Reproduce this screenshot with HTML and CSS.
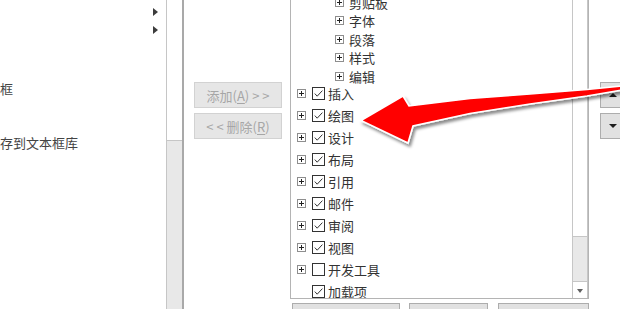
FILE: index.html
```html
<!DOCTYPE html>
<html lang="zh-CN">
<head>
<meta charset="utf-8">
<title>自定义功能区</title>
<link rel="stylesheet" href="styles.css">
</head>
<body>
<svg class="defs" width="0" height="0" aria-hidden="true">
  <symbol id="cb-on" viewBox="0 0 13 13">
    <rect x="0.5" y="0.5" width="12" height="12" fill="#fff" stroke="#333"/>
    <polyline points="2.8,6.6 5.2,9.2 10.4,3.6" fill="none" stroke="#333" stroke-width="1"/>
  </symbol>
  <symbol id="cb-off" viewBox="0 0 13 13">
    <rect x="0.5" y="0.5" width="12" height="12" fill="#fff" stroke="#333"/>
  </symbol>
</svg>
<div class="page">
  <div class="dialog">
    <div class="left-list">
      <div class="left-items">
        <div class="litem arrow-row"><span class="tri"></span></div>
        <div class="litem arrow-row"><span class="tri"></span></div>
        <div class="litem text-row row-frame">框</div>
        <div class="litem text-row row-save">存到文本框库</div>
      </div>
      <div class="vscroll left-scroll">
        <div class="thumb left-thumb"></div>
        <div class="track"></div>
      </div>
    </div>

    <div class="mid-buttons">
      <button class="btn btn-disabled" disabled>添加(<u>A</u>) &gt; &gt;</button>
      <button class="btn btn-disabled" disabled>&lt; &lt; 删除(<u>R</u>)</button>
    </div>

    <div class="right-col">
      <div class="tree-box">
        <div class="tree-view">
          <div class="tree-content">
            <div class="sub-group">
              <div class="sub-row"><span class="exp"></span><span class="label">剪贴板</span></div>
              <div class="sub-row"><span class="exp"></span><span class="label">字体</span></div>
              <div class="sub-row"><span class="exp"></span><span class="label">段落</span></div>
              <div class="sub-row"><span class="exp"></span><span class="label">样式</span></div>
              <div class="sub-row"><span class="exp"></span><span class="label">编辑</span></div>
            </div>
            <div class="top-group">
              <div class="top-row"><span class="exp"></span><svg class="cb"><use href="#cb-on"/></svg><span class="label">插入</span></div>
              <div class="top-row"><span class="exp"></span><svg class="cb"><use href="#cb-on"/></svg><span class="label">绘图</span></div>
              <div class="top-row"><span class="exp"></span><svg class="cb"><use href="#cb-on"/></svg><span class="label">设计</span></div>
              <div class="top-row"><span class="exp"></span><svg class="cb"><use href="#cb-on"/></svg><span class="label">布局</span></div>
              <div class="top-row"><span class="exp"></span><svg class="cb"><use href="#cb-on"/></svg><span class="label">引用</span></div>
              <div class="top-row"><span class="exp"></span><svg class="cb"><use href="#cb-on"/></svg><span class="label">邮件</span></div>
              <div class="top-row"><span class="exp"></span><svg class="cb"><use href="#cb-on"/></svg><span class="label">审阅</span></div>
              <div class="top-row"><span class="exp"></span><svg class="cb"><use href="#cb-on"/></svg><span class="label">视图</span></div>
              <div class="top-row"><span class="exp"></span><svg class="cb"><use href="#cb-off"/></svg><span class="label">开发工具</span></div>
              <div class="top-row"><span class="exp exp-none"></span><svg class="cb"><use href="#cb-on"/></svg><span class="label">加载项</span></div>
            </div>
          </div>
        </div>
        <div class="vscroll right-scroll">
          <div class="thumb right-thumb"></div>
          <div class="track"></div>
          <div class="scroll-down"><span class="tri-down-small"></span></div>
        </div>
      </div>
      <div class="bottom-buttons">
        <button class="btn btn-bottom b1"></button>
        <button class="btn btn-bottom b2"></button>
        <button class="btn btn-bottom b3"></button>
      </div>
    </div>

    <div class="side-buttons">
      <button class="btn btn-side"><span class="tri-up"></span></button>
      <button class="btn btn-side"><span class="tri-down"></span></button>
    </div>
  </div>

  <svg class="annot-arrow" width="620" height="309" viewBox="0 0 620 309" aria-hidden="true">
    <defs>
      <filter id="shadow" x="-10%" y="-30%" width="130%" height="170%">
        <feDropShadow dx="2" dy="3" stdDeviation="1.6" flood-color="#000" flood-opacity="0.45"/>
      </filter>
    </defs>
    <path d="M361,120.5 L403,96 L409,106 L470,98.5 L530,94 L587,89.5 L622,86 L622,90 L587,96 L530,104 L470,113.5 L413,126 L408,143 Z"
          fill="#ff0000" stroke="#ffffff" stroke-width="1.6" stroke-linejoin="miter" filter="url(#shadow)"/>
  </svg>
</div>
</body>
</html>
```

FILE: styles.css
```css
html, body {
  margin: 0;
  padding: 0;
  background: #ffffff;
}

body {
  width: 620px;
  height: 309px;
  overflow: hidden;
  font-family: "Noto Sans CJK SC", "Noto Sans", sans-serif;
  font-size: 13px;
  color: #333333;
}

.defs {
  position: absolute;
  width: 0;
  height: 0;
  overflow: hidden;
}

.page {
  position: relative;
  width: 620px;
  height: 309px;
  overflow: hidden;
}

.dialog {
  display: flex;
  align-items: flex-start;
  height: 309px;
}

/* ---------- left list ---------- */
.left-list {
  display: flex;
  height: 309px;
}

.left-items {
  width: 166px;
  padding-top: 3px;
  box-sizing: border-box;
}

.litem {
  height: 18px;
  display: flex;
  align-items: center;
  color: #444444;
  white-space: nowrap;
}

.arrow-row {
  justify-content: flex-start;
  padding-left: 153px;
}

.tri {
  width: 0;
  height: 0;
  border-top: 4px solid transparent;
  border-bottom: 4px solid transparent;
  border-left: 5px solid #3c3c3c;
}

.row-frame {
  margin-top: 40px;
}

.row-save {
  margin-top: 36px;
}

.vscroll {
  display: flex;
  flex-direction: column;
  box-sizing: border-box;
}

.left-scroll {
  width: 18px;
  height: 309px;
  border-left: 1px solid #c6c6c6;
  border-right: 2px solid #a9a9a9;
}

.thumb {
  background: #ffffff;
  box-sizing: border-box;
  border-bottom: 1px solid #c6c6c6;
}

.left-thumb {
  height: 141px;
}

.track {
  flex: 1;
  background: #e8e8e8;
}

/* ---------- middle buttons ---------- */
.mid-buttons {
  display: flex;
  flex-direction: column;
  gap: 5px;
  margin-left: 10px;
  padding-top: 82px;
  width: 88px;
}

.btn {
  font-family: "Noto Sans CJK SC", "Noto Sans", sans-serif;
  font-size: 13px;
  margin: 0;
  padding: 0;
  box-sizing: border-box;
  background: #e1e1e1;
  border: 1px solid #adadad;
  color: #333333;
  line-height: 1;
}

.btn-disabled {
  width: 88px;
  height: 26px;
  background: #e6e6e6;
  border-color: #d2d2d2;
  color: #a6a6a6;
  white-space: nowrap;
}

.btn-disabled u {
  text-underline-offset: 2px;
}

/* ---------- right tree ---------- */
.right-col {
  margin-left: 8px;
  display: flex;
  flex-direction: column;
}

.tree-box {
  display: flex;
  width: 299px;
  height: 299px;
  box-sizing: border-box;
  border-left: 1px solid #b4b4b4;
  border-right: 1px solid #b4b4b4;
  border-bottom: 1px solid #b4b4b4;
}

.tree-view {
  width: 281px;
  height: 298px;
  overflow: hidden;
}

.tree-content {
  margin-top: -7.25px;
}

.sub-row {
  height: 18.5px;
  display: flex;
  align-items: center;
  padding-left: 44px;
  white-space: nowrap;
}

.sub-row .label {
  margin-left: 5px;
}

.top-group {
  margin-top: -2.75px;
}

.top-row {
  height: 22px;
  display: flex;
  align-items: center;
  padding-left: 6px;
  white-space: nowrap;
}

.top-row .cb {
  width: 13px;
  height: 13px;
  margin-left: 6px;
  flex: none;
}

.top-row .label {
  margin-left: 3px;
}

.label {
  line-height: 1;
  color: #333333;
}

.exp {
  position: relative;
  width: 9px;
  height: 9px;
  box-sizing: border-box;
  border: 1px solid #8e8e8e;
  background: #ffffff;
  flex: none;
}

.exp::before {
  content: "";
  position: absolute;
  left: 1px;
  top: 3px;
  width: 5px;
  height: 1px;
  background: #222222;
}

.exp::after {
  content: "";
  position: absolute;
  left: 3px;
  top: 1px;
  width: 1px;
  height: 5px;
  background: #222222;
}

.exp-none {
  visibility: hidden;
}

.right-scroll {
  width: 16px;
  height: 298px;
  border-left: 1px solid #c6c6c6;
  border-right: 1px solid #c6c6c6;
}

.right-thumb {
  height: 237px;
}

.scroll-down {
  height: 17px;
  box-sizing: border-box;
  border-top: 1px solid #c6c6c6;
  background: #ffffff;
  display: flex;
  align-items: center;
  justify-content: center;
}

.tri-down-small {
  width: 0;
  height: 0;
  border-left: 3px solid transparent;
  border-right: 3px solid transparent;
  border-top: 4px solid #606060;
  margin-top: 1px;
}

.bottom-buttons {
  display: flex;
  margin-top: 4px;
  margin-left: 2px;
}

.btn-bottom {
  height: 24px;
}

.b1 {
  width: 108px;
}

.b2 {
  width: 79px;
  margin-left: 9px;
}

.b3 {
  width: 91px;
  margin-left: 10px;
}

/* ---------- side buttons ---------- */
.side-buttons {
  margin-left: 11px;
  padding-top: 82px;
  display: flex;
  flex-direction: column;
  gap: 5px;
}

.btn-side {
  width: 26px;
  height: 26px;
  display: flex;
  align-items: center;
  justify-content: flex-start;
  padding-left: 8px;
}

.tri-up {
  width: 0;
  height: 0;
  border-left: 4px solid transparent;
  border-right: 4px solid transparent;
  border-bottom: 4px solid #1e1e1e;
}

.tri-down {
  width: 0;
  height: 0;
  border-left: 4px solid transparent;
  border-right: 4px solid transparent;
  border-top: 4px solid #1e1e1e;
}

/* ---------- annotation arrow ---------- */
.annot-arrow {
  position: absolute;
  left: 0;
  top: 0;
  pointer-events: none;
}
```
